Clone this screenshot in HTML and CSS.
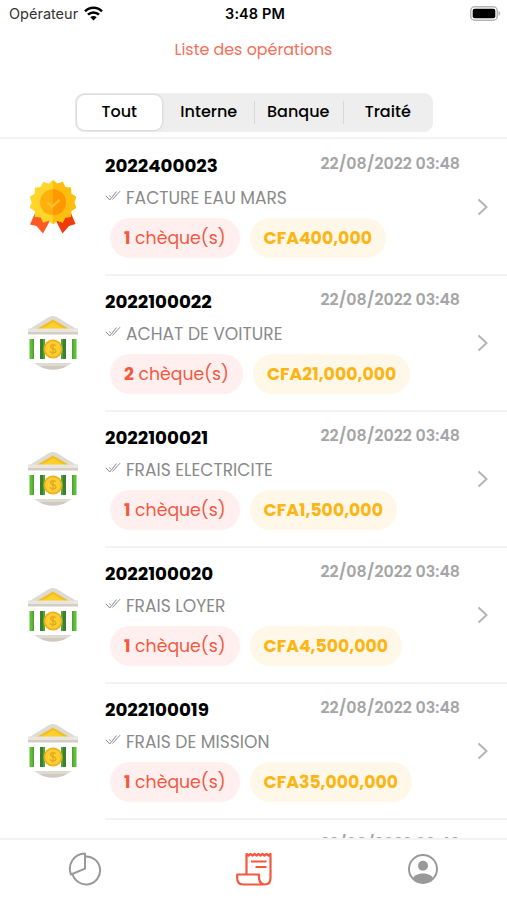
FILE: index.html
```html
<!DOCTYPE html>
<html lang="fr">
<head>
    <meta charset="UTF-8">
    <meta name="viewport" content="width=device-width, initial-scale=1.0">
    <title>Liste des opérations</title>
    <link rel="stylesheet" href="styles.css">
</head>
<body>
    <svg class="sprites" width="0" height="0">
        <symbol id="checks" viewBox="0 0 16 12">
            <path d="M.8 5.800l4 4.200L11.500 1.500M4.500 5.500l1.300 1.400M7.500 9.500L15 1.200" fill="none" stroke="#888" stroke-width="1"/>
        </symbol>
        <symbol id="chevron" viewBox="0 0 12 18">
            <path d="M1.500 1.500L9.500 9l-8 7.500" fill="none" stroke="#b5b5b5" stroke-width="2"/>
        </symbol>
        <symbol id="bank" viewBox="0 0 50 54">
            <path d="M0 14L21 1q4-2 8 0l21 13z" fill="#dedbd2"/>
            <path d="M7 14L25 3.500 43 14z" fill="#f2bd22"/>
            <path d="M12 14L25 6l13 8z" fill="#fbd02d"/>
            <path d="M0 12.500h50V16H0z" fill="#e9e6df"/>
            <path d="M0 16h50v2.500H0z" fill="#d3cec4"/>
            <path d="M1.500 23H6v20H1.500zM44 23h4.500v20H44z" fill="#62bd38"/>
            <path d="M4.500 23H6v20H4.500zM44 23h1.500v20H44z" fill="#4aa42f"/>
            <path d="M12 23h5v20h-5zM33 23h5v20h-5z" fill="#38812f"/>
            <path d="M15 23h2v20h-2zM33 23h2v20h-2z" fill="#55a23a"/>
            <circle cx="25" cy="33" r="9.500" fill="#edae16"/>
            <circle cx="25" cy="33" r="7.800" fill="#fccf35"/>
            <path d="M28 30c-1-1.800-5.500-1.800-5.500.6 0 2.500 5.500 1.700 5.500 4.400 0 2.400-5 2.400-6 .4M25 27.500v11" fill="none" stroke="#e5a51c" stroke-width="1.300"/>
            <path d="M6 47h38l-5 3H11z" fill="#dedbd2"/>
            <path d="M11 50h28c-8 5-20 5-28 0z" fill="#cfcac0"/>
        </symbol>
    </svg>

    <div class="status-bar">
        <div class="carrier">
            <span>Opérateur</span>
            <svg width="19" height="15" viewBox="0 0 19 15">
                <path d="M1 5.400a12 12 0 0 1 17 0M4 8.700a7.800 7.800 0 0 1 11 0" fill="none" stroke="#000" stroke-width="2.500"/>
                <path d="M6.300 11.200a4.600 4.600 0 0 1 6.400 0L9.500 14.400z"/>
            </svg>
        </div>
        <div class="clock">3:48 PM</div>
        <div class="battery">
            <svg width="31" height="15" viewBox="0 0 31 15">
                <rect x=".75" y=".75" width="26.500" height="13.500" rx="4" fill="#fff" stroke="#b5b5b5" stroke-width="1.500"/>
                <rect x="2.700" y="2.700" width="22.600" height="9.600" rx="2"/>
                <path d="M28.500 5c2.200.8 2.200 4.200 0 5z" fill="#b5b5b5"/>
            </svg>
        </div>
    </div>

    <header class="header">
        <h1 class="title">Liste des opérations</h1>
        <div class="tabs">
            <button class="tab active">Tout</button>
            <button class="tab">Interne</button>
            <button class="tab">Banque</button>
            <button class="tab">Traité</button>
        </div>
    </header>

    <main class="list">
        <div class="row">
            <div class="thumb">
                <svg width="46" height="54" viewBox="0 0 46 54">
                    <path d="M5 33L0 44.500l6.500 1.500 6.500 7.500L22 37z" fill="#ff5a23"/>
                    <path d="M41 33l4.500 11-6.500 2-6.500 7.500L24 37z" fill="#f13b0b"/>
                    <path d="M23 0l4.500 3.800L33.200 1.800l2.600 5.300 6 .6.300 6 5.200 3-2.100 5.600 2.100 5.600-5.200 3-.3 6-6 .6-2.600 5.300-5.700-2L23 44.600l-4.500-3.800-5.700 2-2.600-5.300-6-.6-.3-6-5.200-3 2.100-5.600-2.100-5.600 5.200-3 .3-6 6-.6 2.600-5.300 5.700 2z" transform="matrix(.96 0 0 1 .9 0)" fill="#ffd52a"/>
                    <path d="M23 0l4.500 3.800L33.200 1.800l2.600 5.300 6 .6.300 6 5.200 3-2.100 5.600 2.100 5.600-5.200 3-.3 6-6 .6-2.600 5.300-5.700-2L23 44.600z" transform="matrix(.96 0 0 1 .9 0)" fill="#ffbd0d"/>
                    <circle cx="23" cy="22.300" r="13" fill="#ffb00e"/>
                    <path d="M23 9.300a13 13 0 0 1 0 26z" fill="#ff9700"/>
                    <path d="M17.500 22.500l4.500 4.300 7.500-7" fill="none" stroke="#ffc02a" stroke-width="2.500"/>
                </svg>
            </div>
            <div class="content">
                <div class="line">
                    <span class="number">2022400023</span>
                    <span class="date">22/08/2022 03:48</span>
                </div>
                <div class="label"><svg class="checks"><use href="#checks"/></svg><span>FACTURE EAU MARS</span></div>
                <div class="pills">
                    <span class="pill count"><b>1</b> chèque(s)</span>
                    <span class="pill amount">CFA400,000</span>
                </div>
                <svg class="chevron"><use href="#chevron"/></svg>
            </div>
        </div>

        <div class="row">
            <div class="thumb"><svg class="bank"><use href="#bank"/></svg></div>
            <div class="content">
                <div class="line">
                    <span class="number">2022100022</span>
                    <span class="date">22/08/2022 03:48</span>
                </div>
                <div class="label"><svg class="checks"><use href="#checks"/></svg><span>ACHAT DE VOITURE</span></div>
                <div class="pills">
                    <span class="pill count"><b>2</b> chèque(s)</span>
                    <span class="pill amount">CFA21,000,000</span>
                </div>
                <svg class="chevron"><use href="#chevron"/></svg>
            </div>
        </div>

        <div class="row">
            <div class="thumb"><svg class="bank"><use href="#bank"/></svg></div>
            <div class="content">
                <div class="line">
                    <span class="number">2022100021</span>
                    <span class="date">22/08/2022 03:48</span>
                </div>
                <div class="label"><svg class="checks"><use href="#checks"/></svg><span>FRAIS ELECTRICITE</span></div>
                <div class="pills">
                    <span class="pill count"><b>1</b> chèque(s)</span>
                    <span class="pill amount">CFA1,500,000</span>
                </div>
                <svg class="chevron"><use href="#chevron"/></svg>
            </div>
        </div>

        <div class="row">
            <div class="thumb"><svg class="bank"><use href="#bank"/></svg></div>
            <div class="content">
                <div class="line">
                    <span class="number">2022100020</span>
                    <span class="date">22/08/2022 03:48</span>
                </div>
                <div class="label"><svg class="checks"><use href="#checks"/></svg><span>FRAIS LOYER</span></div>
                <div class="pills">
                    <span class="pill count"><b>1</b> chèque(s)</span>
                    <span class="pill amount">CFA4,500,000</span>
                </div>
                <svg class="chevron"><use href="#chevron"/></svg>
            </div>
        </div>

        <div class="row">
            <div class="thumb"><svg class="bank"><use href="#bank"/></svg></div>
            <div class="content">
                <div class="line">
                    <span class="number">2022100019</span>
                    <span class="date">22/08/2022 03:48</span>
                </div>
                <div class="label"><svg class="checks"><use href="#checks"/></svg><span>FRAIS DE MISSION</span></div>
                <div class="pills">
                    <span class="pill count"><b>1</b> chèque(s)</span>
                    <span class="pill amount">CFA35,000,000</span>
                </div>
                <svg class="chevron"><use href="#chevron"/></svg>
            </div>
        </div>

        <div class="row">
            <div class="thumb"></div>
            <div class="content">
                <div class="line">
                    <span class="number">2022100018</span>
                    <span class="date">22/08/2022 03:48</span>
                </div>
            </div>
        </div>
    </main>

    <nav class="tab-bar">
        <a class="nav-item">
            <svg width="34" height="34" viewBox="0 0 34 34" fill="none" stroke="#999" stroke-width="2" stroke-linejoin="round">
                <path d="M17 1.500v15.200L3 22.500C-.8 13 5.500 1.700 17 1.500z"/>
                <path d="M17 4.500a14 14 0 1 1-12.500 17.300"/>
            </svg>
        </a>
        <a class="nav-item">
            <svg width="36" height="34" viewBox="0 0 36 34" fill="none" stroke="#f4583f" stroke-width="2.200" stroke-linejoin="round">
                <path d="M10.500 22V2l2 1.500 2-1.500 2 1.500 2-1.500 2 1.500 2-1.500 2 1.500 2-1.500 2 1.500 2-1.500 2 1.500 2-1.500V26c0 4-2 6.500-5.500 6.500S23.500 30 23 26v-3.500H1.200V26c0 4 2 6.500 5.800 6.500h21"/>
                <path d="M15 9.500h15.500M19.500 15h11"/>
            </svg>
        </a>
        <a class="nav-item">
            <svg width="32" height="32" viewBox="0 0 32 32">
                <circle cx="16" cy="16" r="14" fill="none" stroke="#999" stroke-width="2"/>
                <circle cx="16" cy="12.800" r="5" fill="#999"/>
                <path d="M6 25c2.500-6 17.500-6 20 0-4.500 7-15.500 7-20 0z" fill="#999"/>
            </svg>
        </a>
    </nav>
</body>
</html>
```
FILE: styles.css
```css
* {
    box-sizing: border-box;
}
body {
    font-family: Poppins, Inter, sans-serif;
    background-color: #fff;
    color: #000;
    margin: 0;
    height: 900px;
    display: flex;
    flex-direction: column;
    overflow: hidden;
}
svg {
    display: block;
    flex-shrink: 0;
}
.sprites {
    position: absolute;
}
.status-bar {
    display: grid;
    grid-template-columns: 1fr auto 1fr;
    align-items: center;
    height: 27px;
    padding: 0 6px 0 9px;
    flex-shrink: 0;
    font-family: Inter, sans-serif;
}
.carrier {
    display: flex;
    align-items: center;
    gap: 6px;
    font-size: 14.5px;
    color: #333;
}
.clock {
    font-size: 14.5px;
    font-weight: 600;
    letter-spacing: 0.1px;
}
.battery {
    justify-self: end;
}
.header {
    display: flex;
    flex-direction: column;
    align-items: center;
    height: 112px;
    flex-shrink: 0;
    border-bottom: 2px solid #f3f3f3;
}
.title {
    margin: 11px 0 31px;
    font-size: 15.9px;
    line-height: 24px;
    font-weight: 400;
    color: #f4705a;
}
.tabs {
    display: grid;
    grid-template-columns: repeat(4, 1fr);
    width: 358px;
    height: 39px;
    padding: 2px 0;
    background-color: #eee;
    border-radius: 9px;
}
.tab {
    position: relative;
    padding: 0 0 2px;
    border: none;
    background: none;
    font-family: inherit;
    font-size: 16px;
    font-weight: 500;
    color: #000;
}
.tab.active {
    margin: 0 2px;
    background-color: #fff;
    border-radius: 8px;
    box-shadow: 0 0 3px rgba(0, 0, 0, 0.2);
}
.tab:nth-child(n+3)::before {
    content: "";
    position: absolute;
    left: 0;
    top: 6px;
    width: 1px;
    height: 23px;
    background-color: #d8d8d8;
}
.list {
    flex: 1;
    min-height: 0;
    padding-top: 1px;
    overflow: hidden;
}
.row {
    display: flex;
    height: 136px;
}
.thumb {
    display: flex;
    align-items: center;
    justify-content: center;
    width: 105px;
    height: 134px;
}
.bank {
    width: 50px;
    height: 54px;
}
.content {
    flex: 1;
    position: relative;
    padding: 13px 47px 0 0;
    border-bottom: 2px solid #f3f3f3;
}
.line {
    display: flex;
    justify-content: space-between;
    align-items: center;
    height: 24px;
}
.number {
    font-size: 18.3px;
    font-weight: 700;
}
.date {
    font-size: 15.8px;
    font-weight: 600;
    color: #a5a5a5;
    margin-top: -3px;
}
.label {
    display: flex;
    align-items: center;
    gap: 5px;
    height: 24px;
    margin-top: 9px;
    font-size: 17.1px;
    color: #8a8a8a;
}
.checks {
    width: 16px;
    height: 12px;
    margin-top: -5px;
}
.pills {
    display: flex;
    gap: 10px;
    margin: 8px 0 0 5px;
}
.pill {
    height: 40px;
    padding: 0 14px;
    border-radius: 20px;
    line-height: 41px;
    font-size: 17.3px;
    white-space: nowrap;
}
.count {
    background-color: #fff0ef;
    color: #f4583f;
}
.amount {
    background-color: #fff8e9;
    color: #fdb515;
    font-weight: 700;
}
.chevron {
    position: absolute;
    right: 18px;
    top: 58px;
    width: 12px;
    height: 18px;
}
.tab-bar {
    display: flex;
    height: 62px;
    padding-bottom: 2px;
    flex-shrink: 0;
    border-top: 2px solid #f3f3f3;
}
.nav-item {
    flex: 1;
    display: flex;
    justify-content: center;
    align-items: center;
}
```
